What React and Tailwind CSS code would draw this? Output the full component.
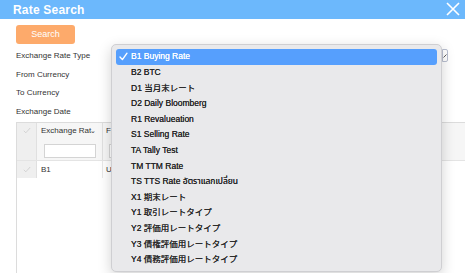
export default function App() {
  const items = [
    "B1 Buying Rate",
    "B2 BTC",
    "D1 当月末レート",
    "D2 Daily Bloomberg",
    "R1 Revalueation",
    "S1 Selling Rate",
    "TA Tally Test",
    "TM TTM Rate",
    "TS TTS Rate อัตราแลกเปลี่ยน",
    "X1 期末レート",
    "Y1 取引レートタイプ",
    "Y2 評価用レートタイプ",
    "Y3 債権評価用レートタイプ",
    "Y4 債務評価用レートタイプ",
  ]
  const labels = ["Exchange Rate Type", "From Currency", "To Currency", "Exchange Date"]

  return (
    <div className="relative w-[465px] h-[273px] overflow-hidden bg-white font-['Liberation_Sans','Noto_Sans_CJK_JP',sans-serif] flex flex-col">
      <div className="h-[19px] shrink-0 bg-[#6cb8fc] flex items-center justify-between pl-[13px] pr-[5px]">
        <span className="text-white text-[12px] font-bold tracking-[0.2px]">Rate Search</span>
        <svg width="14" height="14" viewBox="0 0 14 14" className="mt-[-1px]">
          <path d="M1 1L13 13M13 1L1 13" stroke="white" strokeWidth="1.6" />
        </svg>
      </div>

      <div className="flex-1 flex flex-col pl-4 pt-[6px]">
        <button className="w-[59px] h-[19px] rounded-[3px] bg-[#fdaa6b] text-white text-[9px] leading-none">
          Search
        </button>
        <div className="mt-[3px] flex flex-col">
          {labels.map((l) => (
            <div key={l} className="h-[18.5px] flex items-center text-[8px] text-[#333]">{l}</div>
          ))}
        </div>

        <div className="mt-[1px] flex-1 border-l border-t border-[#dcdcdc] flex flex-col">
          <div className="flex h-[38px] border-b border-[#e4e4e4]">
            <div className="w-[20px] bg-[#efefef] border-r border-[#e0e0e0] flex justify-center pt-[4px]">
              <Check color="#cfcfcf" />
            </div>
            <div className="w-[66px] bg-[#f6f6f6] border-r border-[#e0e0e0] flex flex-col">
              <div className="h-[13px] mt-[1px] pl-[4px] flex items-center text-[8px] text-[#333]">
                Exchange Rat<span className="text-[7px] ml-[-1px] mt-[2px]">⌄</span>
              </div>
              <div className="mt-[7px] ml-[7px] w-[52px] h-[14px] bg-white border border-[#d4d4d4]" />
            </div>
            <div className="flex-1 bg-[#f6f6f6] flex flex-col">
              <div className="h-[13px] mt-[1px] pl-[3px] flex items-center text-[8px] text-[#333]">Fr</div>
              <div className="mt-[7px] ml-[6px] w-[52px] h-[14px] bg-white border border-[#d4d4d4]" />
            </div>
          </div>
          <div className="flex h-[17px]">
            <div className="w-[20px] bg-[#efefef] border-r border-[#e0e0e0] flex justify-center items-center">
              <Check color="#cfcfcf" />
            </div>
            <div className="w-[66px] border-r border-[#e8e8e8] pl-[4px] flex items-center text-[8px] text-[#333]">B1</div>
            <div className="flex-1 pl-[3px] flex items-center text-[8px] text-[#333]">USD</div>
          </div>
        </div>
      </div>

      <div className="absolute left-[442px] top-[49px] w-[6px] h-[13px] bg-white border border-[#b9bfd0] rounded-r-[2px] flex items-center justify-center">
        <svg width="4" height="4" viewBox="0 0 4 4">
          <path d="M0.5 3.5L3.5 0.5" stroke="#333" strokeWidth="0.8" />
        </svg>
      </div>

      <div className="absolute left-[111px] top-[44px] w-[331px] h-[228px] bg-[#e9e9eb] border border-[#cfcfd2] rounded-[5px] shadow-[0_4px_14px_rgba(0,0,0,0.18)] px-[4px] pt-[4px] flex flex-col">
        {items.map((it, i) => (
          <div
            key={it}
            className={
              i === 0
                ? "h-[15.6px] shrink-0 rounded-[3px] bg-[#569ffd] text-white flex items-center text-[8.5px] font-['Liberation_Sans','Noto_Sans_CJK_JP','Noto_Sans_Thai',sans-serif]"
                : "h-[15.6px] shrink-0 text-[#262626] flex items-center text-[8.5px] font-['Liberation_Sans','Noto_Sans_CJK_JP','Noto_Sans_Thai',sans-serif]"
            }
          >
            <span className="w-[15px] flex justify-center">
              {i === 0 && (
                <svg width="9" height="9" viewBox="0 0 9 9">
                  <path d="M1 5L3.4 7.6L8 1.2" fill="none" stroke="white" strokeWidth="1.4" strokeLinecap="round" strokeLinejoin="round" />
                </svg>
              )}
            </span>
            <span className="[text-shadow:0_0_0.3px_currentColor]">{it}</span>
          </div>
        ))}
      </div>
    </div>
  )
}

function Check({ color }) {
  return (
    <svg width="8" height="7" viewBox="0 0 8 7">
      <path d="M0.8 3.8L2.8 5.8L7.2 1" fill="none" stroke={color} strokeWidth="0.9" />
    </svg>
  )
}
